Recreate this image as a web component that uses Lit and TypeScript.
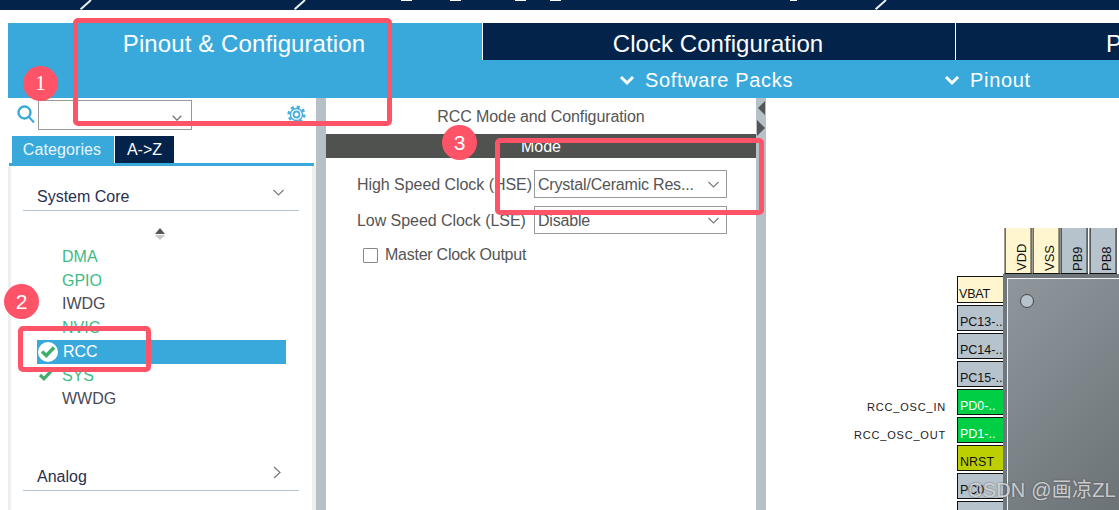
import { LitElement, html, css, svg } from 'lit';
import { customElement } from 'lit/decorators.js';

const chevron = (w = 12, h = 7, color = '#7a7a7a', sw = 1.2) => html`
  <svg class="chev" width=${w} height=${h} viewBox="0 0 12 7">
    <path d="M1 1 L6 6 L11 1" fill="none" stroke=${color} stroke-width=${sw} />
  </svg>`;

const whiteChevron = html`
  <svg class="white-chev" width="16" height="12" viewBox="0 0 16 12">
    <path d="M2 3 L8 9 L14 3" fill="none" stroke="#fff" stroke-width="3" />
  </svg>`;

const check = (w: number, h: number) => svg`
  <svg width=${w} height=${h} viewBox="0 0 16 13">
    <path d="M2 6.5 L6.3 10.5 L14 2.5" fill="none" stroke="#3fae6b" stroke-width="3.4" />
  </svg>`;

const topPins = [
  { name: 'VDD', cls: 'power' },
  { name: 'VSS', cls: 'power' },
  { name: 'PB9', cls: '' },
  { name: 'PB8', cls: '' },
];

const leftPins = [
  { name: 'VBAT', cls: 'power tall', label: '' },
  { name: 'PC13-..', cls: '', label: '' },
  { name: 'PC14-..', cls: '', label: '' },
  { name: 'PC15-..', cls: '', label: '' },
  { name: 'PD0-..', cls: 'used', label: 'RCC_OSC_IN' },
  { name: 'PD1-..', cls: 'used', label: 'RCC_OSC_OUT' },
  { name: 'NRST', cls: 'reset', label: '' },
  { name: 'PC0', cls: '', label: '' },
  { name: '', cls: '', label: '' },
];

const peripherals = [
  { name: 'DMA', cls: 'ok' },
  { name: 'GPIO', cls: 'ok' },
  { name: 'IWDG', cls: '' },
  { name: 'NVIC', cls: 'ok' },
  { name: 'RCC', cls: 'selected' },
  { name: 'SYS', cls: 'ok checked' },
  { name: 'WWDG', cls: '' },
];

@customElement('app-root')
export class AppRoot extends LitElement {
  static styles = css`
    :host {
      display: block;
      width: 1119px;
      height: 510px;
      position: relative;
      overflow: hidden;
      background: #fff;
      font-family: 'Liberation Sans', Arial, sans-serif;
    }
    .title-strip {
      height: 10px;
      background: #03234b;
      position: relative;
      margin-bottom: 13px;
      overflow: hidden;
    }
    .slash {
      position: absolute;
      top: 0;
      width: 2px;
      height: 14px;
      background: #e8edf2;
      transform: rotate(48deg);
      transform-origin: top;
    }
    .dash {
      position: absolute;
      top: 0;
      height: 1px;
      width: 11px;
      background: #fff;
    }
    .tabs {
      display: flex;
      height: 37px;
      padding-left: 8px;
      overflow: hidden;
    }
    .tab {
      display: flex;
      flex: none;
      align-items: center;
      justify-content: center;
      color: #fff;
      background: #03234b;
      border-left: 1px solid #fff;
      font-size: 24px;
      box-sizing: border-box;
      padding-top: 5px;
      white-space: nowrap;
    }
    .tab.active {
      width: 474px;
      background: #39a9dc;
      border-left: 0;
      letter-spacing: 0.1px;
      padding-right: 2px;
    }
    .tab.clock {
      width: 473px;
      letter-spacing: 0.05px;
      padding-right: 2px;
    }
    .tab.next {
      flex: 1;
      min-width: 0;
      justify-content: flex-start;
      padding-left: 150px;
    }
    .subbar {
      height: 38px;
      margin-left: 8px;
      background: #39a9dc;
      display: flex;
      align-items: center;
      color: #fff;
      font-size: 20px;
      letter-spacing: 0.65px;
      padding: 2px 0 0 611px;
      box-sizing: border-box;
    }
    .sub-item {
      display: flex;
      align-items: center;
      gap: 10px;
    }
    .sub-item + .sub-item {
      margin-left: 151px;
    }
    .main {
      display: flex;
      height: 412px;
    }
    .left {
      width: 308px;
      margin-left: 8px;
      display: flex;
      flex-direction: column;
    }
    .search {
      height: 38px;
      display: flex;
      align-items: flex-start;
      padding: 2px 9px 0 9px;
      box-sizing: border-box;
    }
    .search-icon {
      margin: 5px 3px 0 0;
    }
    .combo {
      width: 154px;
      height: 30px;
      box-sizing: border-box;
      border: 1px solid #999;
      display: flex;
      justify-content: flex-end;
      align-items: center;
      padding: 5px 8px 0 0;
    }
    .gear {
      margin: 5px 0 0 94px;
    }
    .left-tabs {
      display: flex;
      height: 27px;
      padding-left: 4px;
      font-size: 16px;
      color: #fff;
    }
    .left-tabs div {
      display: flex;
      align-items: center;
      justify-content: center;
    }
    .cat {
      width: 102px;
      background: #39a9dc;
      letter-spacing: 0.1px;
      color: #eaf6fb;
      padding-right: 2px;
      box-sizing: border-box;
    }
    .az {
      width: 59px;
      margin-left: 1px;
      background: #03234b;
    }
    .left-rule {
      height: 3px;
      margin-left: 1px;
      margin-right: 2px;
      background: #39a9dc;
    }
    .left-body {
      flex: 1;
      border-left: 3px solid #eeeeee;
      border-right: 4px solid #eeeeee;
      padding: 0 13px 0 12px;
      display: flex;
      flex-direction: column;
    }
    .group {
      height: 30px;
      margin-top: 15px;
      box-sizing: border-box;
      border-bottom: 1px solid #b4c4d4;
      display: flex;
      justify-content: space-between;
      align-items: flex-start;
      padding: 7px 14px 0 14px;
      font-size: 16px;
      color: #27304f;
    }
    .group svg {
      margin-top: 1px;
    }
    .group.analog {
      margin-top: 49px;
      height: 31px;
      padding: 8px 18px 0 14px;
    }
    .group.analog svg {
      margin-top: -2px;
    }
    .scroller {
      display: flex;
      flex-direction: column;
      align-items: center;
      gap: 1px;
      height: 15px;
      margin: 17px 0 0 0;
      padding-right: 2px;
    }
    .tri-up {
      border: 5px solid transparent;
      border-top: 0;
      border-bottom: 6px solid #555;
    }
    .tri-down {
      border: 5px solid transparent;
      border-bottom: 0;
      border-top: 5px solid #c8c8c8;
    }
    .list {
      margin-top: 2px;
      padding-left: 14px;
      font-size: 16px;
      color: #4a4a55;
    }
    .item {
      height: 23.7px;
      display: flex;
      align-items: center;
      padding-left: 25px;
      width: 249px;
      box-sizing: border-box;
      position: relative;
    }
    .item.ok {
      color: #3dbb85;
    }
    .item.selected {
      background: #39a9dc;
      color: #fff;
      height: 24px;
      padding-left: 26px;
    }
    .mark {
      position: absolute;
      left: 1px;
      top: 2px;
      width: 20px;
      height: 20px;
      border-radius: 50%;
      background: #fff;
      display: flex;
      align-items: center;
      justify-content: center;
    }
    .tick {
      position: absolute;
      left: 1px;
      top: 5px;
      display: flex;
    }
    .splitter {
      width: 10px;
      background: #b5c0c7;
      flex: none;
      position: relative;
    }
    .arrow-left,
    .arrow-right {
      position: absolute;
      width: 0;
      height: 0;
      border-style: solid;
      border-color: transparent;
    }
    .arrow-left {
      left: 2px;
      top: 3px;
      border-width: 7px 7px 7px 0;
      border-right-color: #555;
    }
    .arrow-right {
      left: 1px;
      top: 22px;
      border-width: 8px 0 8px 8px;
      border-left-color: #555;
    }
    .center {
      width: 430px;
      flex: none;
      color: #555;
      font-size: 16px;
    }
    .center-title {
      height: 36px;
      display: flex;
      align-items: flex-end;
      justify-content: center;
      padding: 0 0 8px 0;
      box-sizing: border-box;
      letter-spacing: -0.1px;
    }
    .mode-bar {
      height: 24px;
      background: #505250;
      color: #fff;
      display: flex;
      align-items: center;
      justify-content: center;
      margin-bottom: 12px;
      padding-top: 2px;
      box-sizing: border-box;
    }
    .field {
      display: flex;
      align-items: center;
      height: 28px;
      margin-bottom: 8px;
      padding-left: 31px;
    }
    .field label {
      width: 177px;
      white-space: nowrap;
      letter-spacing: -0.05px;
      padding-top: 2px;
    }
    .select {
      width: 193px;
      height: 28px;
      border: 1px solid #999;
      box-sizing: border-box;
      display: flex;
      align-items: center;
      justify-content: space-between;
      padding: 2px 6px 0 3px;
      letter-spacing: -0.2px;
    }
    .select svg {
      margin-top: -2px;
    }
    .master {
      display: flex;
      align-items: center;
      gap: 7px;
      padding-left: 37px;
      margin-top: 12px;
      letter-spacing: -0.25px;
    }
    .box {
      width: 15px;
      height: 15px;
      border: 1px solid #888;
      border-radius: 1px;
      box-sizing: border-box;
    }
    .canvas {
      flex: 1;
      padding-top: 130px;
      min-width: 0;
      overflow: hidden;
      font-size: 12.5px;
      color: #111;
    }
    .top-pins {
      display: flex;
      gap: 1.6px;
      margin-left: 239px;
      height: 46px;
    }
    .top-pin {
      width: 26.6px;
      flex: none;
      border: 1px solid #111;
      border-bottom: 0;
      box-sizing: border-box;
      background: #b7c3cc;
      writing-mode: vertical-rl;
      transform: rotate(180deg);
      display: flex;
      align-items: center;
      padding: 2px 7px 0 0;
      font-size: 13px;
    }
    .top-pin.power {
      background: #fff5cf;
    }
    .top-row {
      display: flex;
    }
    .pins {
      margin-top: 2px;
      width: 237px;
      flex: none;
      display: flex;
      flex-direction: column;
      gap: 2px;
    }
    .pin-row {
      display: flex;
      height: 26px;
    }
    .pin-row.tall {
      height: 27px;
    }
    .pin-label {
      width: 180px;
      flex: none;
      align-self: flex-end;
      margin-bottom: 2px;
      text-align: right;
      font-size: 11px;
      letter-spacing: 0.8px;
      color: #222;
      white-space: nowrap;
    }
    .pin {
      margin-left: 11px;
      width: 46px;
      height: 100%;
      flex: none;
      box-sizing: border-box;
      border: 1px solid #111;
      border-right: 0;
      background: #b7c3cc;
      display: flex;
      align-items: flex-end;
      padding: 0 0 1px 2px;
      white-space: nowrap;
      overflow: hidden;
    }
    .pin.power {
      background: #fff5cf;
      padding-left: 1px;
      letter-spacing: -0.2px;
    }
    .pin.used {
      background: #00cf45;
      color: #fff;
    }
    .pin.reset {
      background: #bccf00;
    }
    .chip {
      flex: 1;
      height: 236px;
      background: #6f777d;
      padding: 4px 0 0 4px;
      box-sizing: border-box;
    }
    .chip-face {
      height: 100%;
      border: 1px solid #f0f2f3;
      border-right: 0;
      border-bottom: 0;
      background: linear-gradient(135deg, #8f979d, #6c7377);
      padding: 15px 0 0 12px;
      box-sizing: border-box;
    }
    .dot {
      width: 14px;
      height: 14px;
      box-sizing: border-box;
      border: 1px solid #444;
      border-radius: 50%;
      background: #b7c3cc;
    }
    .watermark {
      position: absolute;
      left: 968px;
      top: 478px;
      font-size: 20px;
      line-height: 24px;
      letter-spacing: 0.2px;
      color: rgba(232, 235, 238, 0.8);
      text-shadow: 0 0 2px rgba(60, 60, 60, 0.8);
      font-family: 'Liberation Sans', 'Noto Sans CJK SC', sans-serif;
      white-space: nowrap;
    }
    .note-box {
      position: absolute;
      border: 5px solid #ff5468;
      border-radius: 5px;
      box-sizing: border-box;
    }
    .note-box.one {
      left: 73px;
      top: 18px;
      width: 319px;
      height: 108px;
    }
    .note-box.two {
      left: 18px;
      top: 326px;
      width: 133px;
      height: 46px;
    }
    .note-box.three {
      left: 495px;
      top: 138px;
      width: 269px;
      height: 77px;
    }
    .badge {
      position: absolute;
      width: 35px;
      height: 35px;
      border-radius: 50%;
      background: #ff5468;
      color: #fff;
      display: flex;
      align-items: center;
      justify-content: center;
      font-size: 21px;
      font-family: 'Liberation Sans', sans-serif;
    }
    .badge.one {
      left: 23px;
      top: 66px;
      font-family: 'Liberation Serif', serif;
    }
    .badge.two {
      left: 4px;
      top: 284px;
    }
    .badge.three {
      left: 442px;
      top: 125px;
    }
  `;

  render() {
    return html`
      <div class="title-strip">
        <i class="slash" style="left:90px"></i>
        <i class="slash" style="left:304px"></i>
        <i class="slash" style="left:885px"></i>
        <i class="dash" style="left:401px"></i>
        <i class="dash" style="left:450px"></i>
        <i class="dash" style="left:515px"></i>
        <i class="dash" style="left:550px"></i>
        <i class="dash" style="left:790px;width:7px"></i>
      </div>
      <div class="tabs">
        <div class="tab active">Pinout &amp; Configuration</div>
        <div class="tab clock">Clock Configuration</div>
        <div class="tab next">P</div>
      </div>
      <div class="subbar">
        <div class="sub-item">${whiteChevron}<span>Software Packs</span></div>
        <div class="sub-item">${whiteChevron}<span>Pinout</span></div>
      </div>
      <div class="main">
        <div class="left">
          <div class="search">
            <svg class="search-icon" width="18" height="19" viewBox="0 0 18 19">
              <circle cx="7.5" cy="7.5" r="6" fill="none" stroke="#39a9dc" stroke-width="2.4" />
              <path d="M12 12 L17 17.5" stroke="#39a9dc" stroke-width="2" />
            </svg>
            <div class="combo">${chevron(12, 6, '#777', 1.6)}</div>
            <svg class="gear" width="21" height="19" viewBox="0 0 21 19">
              <circle cx="10.5" cy="9.5" r="7.6" fill="none" stroke="#4aaee0" stroke-width="3" stroke-dasharray="3 2.97" />
              <circle cx="10.5" cy="9.5" r="6" fill="#fff" stroke="#4aaee0" stroke-width="1.4" />
              <circle cx="10.5" cy="9.5" r="3" fill="#fff" stroke="#4aaee0" stroke-width="1.8" />
            </svg>
          </div>
          <div class="left-tabs">
            <div class="cat">Categories</div>
            <div class="az">A-&gt;Z</div>
          </div>
          <div class="left-rule"></div>
          <div class="left-body">
            <div class="group">
              <span>System Core</span>
              ${chevron(13, 7)}
            </div>
            <div class="scroller"><i class="tri-up"></i><i class="tri-down"></i></div>
            <div class="list">
              ${peripherals.map(
                (p) => html`
                  <div class="item ${p.cls}">
                    ${p.cls === 'selected' ? html`<span class="mark">${check(16, 13)}</span>` : ''}
                    ${p.cls.includes('checked') ? html`<span class="tick">${check(15, 12)}</span>` : ''}
                    ${p.name}
                  </div>
                `
              )}
            </div>
            <div class="group analog">
              <span>Analog</span>
              <svg width="8" height="13" viewBox="0 0 8 13">
                <path d="M1 1 L7 6.5 L1 12" fill="none" stroke="#7a7a7a" stroke-width="1.2" />
              </svg>
            </div>
          </div>
        </div>
        <div class="splitter"></div>
        <div class="center">
          <div class="center-title">RCC Mode and Configuration</div>
          <div class="mode-bar">Mode</div>
          <div class="field">
            <label>High Speed Clock (HSE)</label>
            <div class="select"><span>Crystal/Ceramic Res...</span>${chevron(13, 7)}</div>
          </div>
          <div class="field">
            <label>Low Speed Clock (LSE)</label>
            <div class="select"><span>Disable</span>${chevron(13, 7)}</div>
          </div>
          <div class="master"><i class="box"></i><span>Master Clock Output</span></div>
        </div>
        <div class="splitter">
          <i class="arrow-left"></i>
          <i class="arrow-right"></i>
        </div>
        <div class="canvas">
          <div class="top-pins">
            ${topPins.map((p) => html`<div class="top-pin ${p.cls}">${p.name}</div>`)}
          </div>
          <div class="top-row">
            <div class="pins">
              ${leftPins.map(
                (p) => html`
                  <div class="pin-row ${p.cls.includes('tall') ? 'tall' : ''}">
                    <span class="pin-label">${p.label}</span>
                    <div class="pin ${p.cls}">${p.name}</div>
                  </div>
                `
              )}
            </div>
            <div class="chip">
              <div class="chip-face"><div class="dot"></div></div>
            </div>
          </div>
        </div>
      </div>
      <div class="watermark">CSDN @画凉ZL</div>
      <div class="note-box one"></div>
      <div class="note-box two"></div>
      <div class="note-box three"></div>
      <div class="badge one">1</div>
      <div class="badge two">2</div>
      <div class="badge three">3</div>
    `;
  }
}
